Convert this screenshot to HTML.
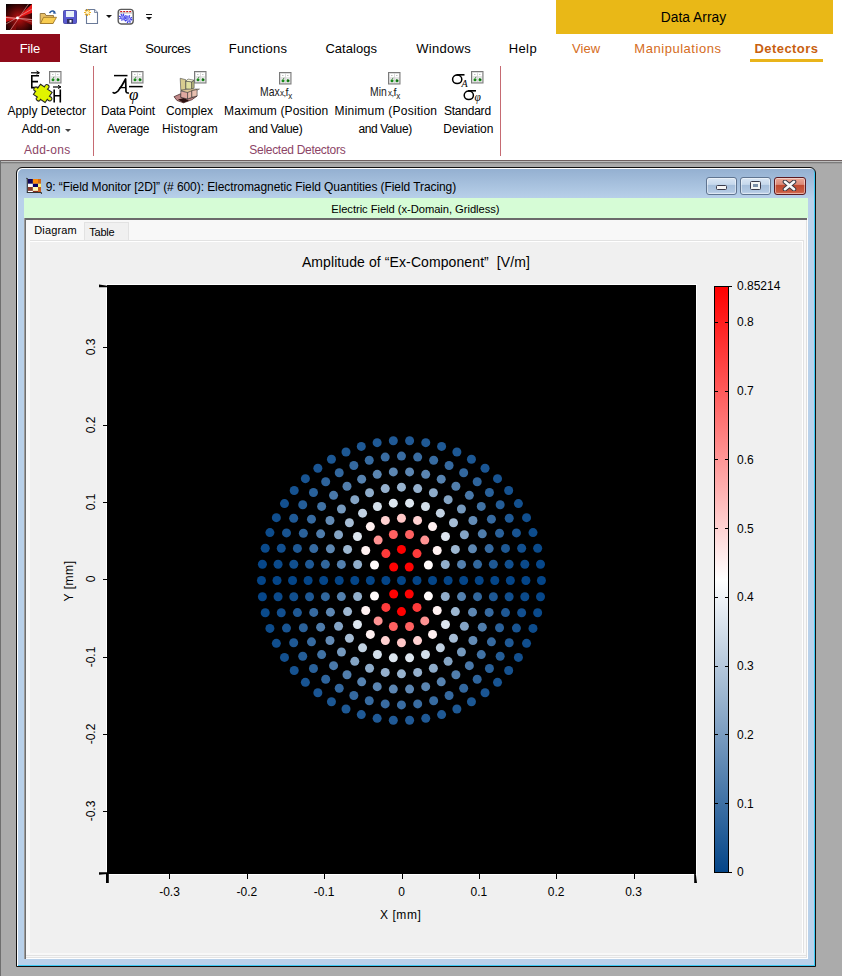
<!DOCTYPE html>
<html><head><meta charset="utf-8"><style>
html,body{margin:0;padding:0;width:842px;height:976px;overflow:hidden;background:#fff;position:relative}
.t{position:absolute;white-space:pre;font-family:"Liberation Sans", sans-serif}
</style></head><body>
<div style="position:absolute;left:0px;top:0px;width:842px;height:160px;background:#fff"></div><div style="position:absolute;left:556px;top:0px;width:277px;height:34px;background:#e9b817"></div><div class="t" style="left:660.7px;top:11.1px;font-size:13.8px;line-height:13.8px;color:#000;font-weight:normal;text-align:left;letter-spacing:0.029px;">Data Array</div><div style="position:absolute;left:0px;top:34px;width:60px;height:28px;background:#8f0b1a"></div><div class="t" style="left:19.8px;top:41.7px;font-size:13px;line-height:13px;color:#fff;font-weight:normal;text-align:left;letter-spacing:-0.206px;">File</div><div class="t" style="left:79.3px;top:41.7px;font-size:13px;line-height:13px;color:#000;font-weight:normal;text-align:left;letter-spacing:0.09px;">Start</div><div class="t" style="left:145.3px;top:41.7px;font-size:13px;line-height:13px;color:#000;font-weight:normal;text-align:left;letter-spacing:-0.382px;">Sources</div><div class="t" style="left:228.7px;top:41.7px;font-size:13px;line-height:13px;color:#000;font-weight:normal;text-align:left;letter-spacing:0.255px;">Functions</div><div class="t" style="left:325.4px;top:41.7px;font-size:13px;line-height:13px;color:#000;font-weight:normal;text-align:left;letter-spacing:0.042px;">Catalogs</div><div class="t" style="left:416.2px;top:41.7px;font-size:13px;line-height:13px;color:#000;font-weight:normal;text-align:left;letter-spacing:0.311px;">Windows</div><div class="t" style="left:508.7px;top:41.7px;font-size:13px;line-height:13px;color:#000;font-weight:normal;text-align:left;letter-spacing:0.398px;">Help</div><div class="t" style="left:571.9px;top:41.7px;font-size:13px;line-height:13px;color:#d56c22;font-weight:normal;text-align:left;letter-spacing:0.082px;">View</div><div class="t" style="left:634.3px;top:41.7px;font-size:13px;line-height:13px;color:#d56c22;font-weight:normal;text-align:left;letter-spacing:0.54px;">Manipulations</div><div class="t" style="left:754.5px;top:41.7px;font-size:13px;line-height:13px;color:#c8600f;font-weight:bold;text-align:left;letter-spacing:0.433px;">Detectors</div><div style="position:absolute;left:750px;top:59px;width:73px;height:3px;background:#e9b41a"></div><svg style="position:absolute;left:6px;top:4px" width="26" height="26" viewBox="0 0 26 26">
<defs>
<radialGradient id="ag" cx="0.5" cy="0.55" r="0.7"><stop offset="0" stop-color="#c01010"/><stop offset="0.6" stop-color="#500606"/><stop offset="1" stop-color="#080000"/></radialGradient>
<linearGradient id="ag2" x1="0" y1="0" x2="1" y2="0"><stop offset="0" stop-color="#e01818"/><stop offset="1" stop-color="#f02020"/></linearGradient>
</defs>
<rect width="26" height="26" fill="url(#ag)"/>
<path d="M11.5 14 L26 0 L26 9 Z" fill="#e81818"/>
<path d="M0 12 L11.5 14 L0 18 Z" fill="#d81414" opacity="0.9"/>
<path d="M11.5 14 L26 15 L26 21 Z" fill="#a00c0c" opacity="0.8"/>
<path d="M11.5 14 L4 26 L10 26 Z" fill="#900a0a" opacity="0.7"/>
<path d="M0 13.5 L26 15.5" stroke="#f0c8c8" stroke-width="0.7"/>
<path d="M0 20 L26 5" stroke="#e8b0b0" stroke-width="0.6"/>
<path d="M4.5 26 L22.5 0" stroke="#e0a0a0" stroke-width="0.6"/>
<path d="M11.5 14 L26 18" stroke="#d88080" stroke-width="0.5"/>
<circle cx="11.5" cy="14" r="1.4" fill="#fff"/>
</svg><svg style="position:absolute;left:39px;top:9px" width="19" height="16" viewBox="0 0 19 16">
<path d="M1.2 4.5 L1.2 14.5 L14 14.5 L14.5 6.5 L7 6.5 L6 4.5 Z" fill="#e8c068" stroke="#907038" stroke-width="0.9"/>
<path d="M1.5 14.5 L4.5 8.3 L17.5 8.3 L14 14.5 Z" fill="#f8cc50" stroke="#a07828" stroke-width="0.9"/>
<path d="M10.5 4 Q13 0.5 16 3.2" stroke="#2a5aa0" stroke-width="1.5" fill="none"/>
<path d="M14.6 1.6 L17.4 4.4 L14.2 4.8 Z" fill="#2a5aa0"/>
</svg><svg style="position:absolute;left:63px;top:10px" width="14" height="14" viewBox="0 0 14 14">
<rect x="0.5" y="0.5" width="13" height="13" rx="1" fill="#5a5ad0" stroke="#3a3aa0" stroke-width="0.8"/>
<rect x="3" y="1" width="8" height="6" fill="#e8f0f8"/>
<rect x="4" y="9" width="6" height="4.5" fill="#303060"/>
<rect x="6.5" y="10" width="2" height="2.5" fill="#fff"/>
</svg><svg style="position:absolute;left:80px;top:4px" width="22" height="22" viewBox="0 0 22 22">
<path d="M6.5 5.5 L14.5 5.5 L17.5 8.5 L17.5 19.5 L6.5 19.5 Z" fill="#fff" stroke="#6a7a98" stroke-width="1.1"/>
<path d="M14.5 5.5 L14.5 8.5 L17.5 8.5" fill="#dfe4ee" stroke="#6a7a98" stroke-width="0.8"/>
<g stroke="#f0b020" stroke-width="1.1"><path d="M7.5 5 V12 M4 8.5 H11 M5 6 L10 11 M10 6 L5 11"/></g>
<circle cx="7.5" cy="8.5" r="1.6" fill="#fff8d0"/>
</svg><svg style="position:absolute;left:117px;top:8px" width="18" height="18" viewBox="0 0 18 18">
<rect x="1.2" y="1.4" width="15" height="14.6" rx="3" fill="#fff" stroke="#5a5a5a" stroke-width="1.4"/>
<path d="M3.2 3.6 h2 M6.2 3.6 h2 M9.2 3.6 h2 M12.2 3.6 h2" stroke="#d01818" stroke-width="1.3"/>
<path d="M2 5 H15.5" stroke="#888" stroke-width="0.6"/>
<circle cx="5.6" cy="9.2" r="2.90" fill="none" stroke="#3a3ae8" stroke-width="1.5" stroke-dasharray="1.14 1.14"/><circle cx="5.6" cy="9.2" r="1.97" fill="#e8e8ff" stroke="#3a3ae8" stroke-width="0.9"/><circle cx="5.6" cy="9.2" r="0.81" fill="#fff" stroke="#3a3ae8" stroke-width="0.7"/><circle cx="11.3" cy="11.1" r="3.30" fill="none" stroke="#3a3ae8" stroke-width="1.5" stroke-dasharray="1.30 1.30"/><circle cx="11.3" cy="11.1" r="2.24" fill="#e8e8ff" stroke="#3a3ae8" stroke-width="0.9"/><circle cx="11.3" cy="11.1" r="0.92" fill="#fff" stroke="#3a3ae8" stroke-width="0.7"/>
</svg><div style="position:absolute;left:106px;top:15px;width:0;height:0;border-left:3px solid transparent;border-right:3px solid transparent;border-top:3.5px solid #111"></div>
<div style="position:absolute;left:146px;top:14px;width:6px;height:1px;background:#111"></div>
<div style="position:absolute;left:146px;top:17px;width:0;height:0;border-left:3px solid transparent;border-right:3px solid transparent;border-top:3.5px solid #111"></div><svg style="position:absolute;left:28px;top:70px" width="36" height="34" viewBox="0 0 36 34">
<path d="M3.8 5 V18.3 M3 5.8 H11 M3.8 11.6 H10 M3 17.6 H11.2" stroke="#000" stroke-width="1.6" fill="none"/>
<path d="M3 2.8 H11" stroke="#000" stroke-width="1.2"/><path d="M8.5 1 L11.5 2.8 L8.5 4.2" stroke="#000" stroke-width="1" fill="none"/>
<path d="M26.2 19.5 V32.6 M32.3 19.5 V32.6 M26 25.8 H32.5" stroke="#000" stroke-width="1.6" fill="none"/>
<path d="M25 17 H32.5" stroke="#000" stroke-width="1.2"/><path d="M30 15.3 L33 17 L30 18.5" stroke="#000" stroke-width="1" fill="none"/>
<g transform="translate(16 22.5) rotate(35) scale(0.95)">
<path d="M-8 -5 H-3 Q-4 -9 -1 -9 Q2 -9 1 -5 H7 V0 Q11 -1 11 2 Q11 5 7 4 V8 H1 Q2 11 -1 11 Q-4 11 -3 8 H-8 V4 Q-11 5 -11 2 Q-11 -1 -8 0 Z" fill="#e0f400" stroke="#222" stroke-width="1.1"/>
</g>
</svg><svg style="position:absolute;left:49px;top:71px" width="13" height="13" viewBox="0 0 13 13">
<rect x="0.5" y="0.5" width="11.5" height="11.5" fill="#d4d4d4" stroke="#7a7a7a" stroke-width="1"/>
<rect x="1.8" y="1.8" width="4.2" height="3.6" fill="#fff"/><rect x="6.8" y="1.8" width="4.2" height="3.6" fill="#fff"/>
<rect x="1.8" y="6.3" width="4.2" height="4.5" fill="#ececec"/><rect x="6.8" y="6.3" width="4.2" height="4.5" fill="#ececec"/>
<path d="M3 3.5 h1.5 M8 3.5 h1.5" stroke="#999" stroke-width="0.6"/>
<circle cx="4" cy="8.8" r="1.5" fill="#1a8a1a"/><circle cx="9" cy="8.8" r="1.5" fill="#1a8a1a"/>
<path d="M4.5 6.8 L5 5.8 M8.2 7.8 L10.2 8.8" stroke="#0a4a0a" stroke-width="0.8"/>
</svg><svg style="position:absolute;left:110px;top:72px" width="36" height="32" viewBox="0 0 36 32">
<path d="M4 3.6 H17.5" stroke="#000" stroke-width="1.5"/>
<path d="M3.2 20.6 Q5 22 8 19 Q12 14 15.6 7 L16 19.6 Q16.3 21.2 18.3 21" stroke="#000" stroke-width="1.7" fill="none" stroke-linecap="round" stroke-linejoin="round"/><path d="M9.5 15.6 H16" stroke="#000" stroke-width="1.3"/>
<path d="M19 14.6 H32.7" stroke="#000" stroke-width="1.5"/>
<text x="19" y="28" font-family="Liberation Serif" font-style="italic" font-size="17" fill="#000">φ</text>
</svg><svg style="position:absolute;left:131px;top:71px" width="13" height="13" viewBox="0 0 13 13">
<rect x="0.5" y="0.5" width="11.5" height="11.5" fill="#d4d4d4" stroke="#7a7a7a" stroke-width="1"/>
<rect x="1.8" y="1.8" width="4.2" height="3.6" fill="#fff"/><rect x="6.8" y="1.8" width="4.2" height="3.6" fill="#fff"/>
<rect x="1.8" y="6.3" width="4.2" height="4.5" fill="#ececec"/><rect x="6.8" y="6.3" width="4.2" height="4.5" fill="#ececec"/>
<path d="M3 3.5 h1.5 M8 3.5 h1.5" stroke="#999" stroke-width="0.6"/>
<circle cx="4" cy="8.8" r="1.5" fill="#1a8a1a"/><circle cx="9" cy="8.8" r="1.5" fill="#1a8a1a"/>
<path d="M4.5 6.8 L5 5.8 M8.2 7.8 L10.2 8.8" stroke="#0a4a0a" stroke-width="0.8"/>
</svg><svg style="position:absolute;left:168px;top:64px" width="40" height="40" viewBox="0 0 40 40">
<path d="M6 32.7 L12.8 29.7 L12.8 33.3 L19.6 35 L29.1 32 L23.8 35.8 L15.4 38.8 L8.9 36.4 Z" fill="#c08888" stroke="#3a1a1a" stroke-width="0.7"/>
<path d="M10 35.5 L15.4 38.8 L21 36.8 L16 34 Z" fill="#2a1010"/>
<path d="M12.2 14.3 L17.8 15.7 L17.8 25.5 L12.8 26.7 Z" fill="#d8cc90" stroke="#444" stroke-width="0.6"/>
<path d="M17.8 17.2 L23.8 17.8 L23.8 25.5 L17.8 24.9 Z" fill="#e0e0a0" stroke="#333" stroke-width="0.6"/>
<path d="M23.8 17.8 L26.1 16.2 L26.1 23.8 L23.8 25.5 Z" fill="#c8c888" stroke="#333" stroke-width="0.6"/>
<path d="M17.8 17.2 L20 15 L26.1 16.2 L23.8 17.8 Z" fill="#f4f4d0" stroke="#333" stroke-width="0.5"/>
<path d="M13 26 L23.8 25 L31.5 25 L25 28 L17.8 28.5 Z" fill="#e0c898" stroke="#444" stroke-width="0.5"/>
<path d="M12.8 27 L19.6 28.5 L19.6 35 L12.8 33.3 Z" fill="#e0a8a0" stroke="#333" stroke-width="0.6"/>
<path d="M19.6 28.5 L23.8 26.7 L23.8 33.3 L19.6 35 Z" fill="#e8b8a8" stroke="#333" stroke-width="0.6"/>
<path d="M23.8 26.7 L29.1 25.5 L29.1 32 L23.8 33.3 Z" fill="#e8c0b0" stroke="#333" stroke-width="0.6"/>
</svg><svg style="position:absolute;left:194px;top:71px" width="13" height="13" viewBox="0 0 13 13">
<rect x="0.5" y="0.5" width="11.5" height="11.5" fill="#d4d4d4" stroke="#7a7a7a" stroke-width="1"/>
<rect x="1.8" y="1.8" width="4.2" height="3.6" fill="#fff"/><rect x="6.8" y="1.8" width="4.2" height="3.6" fill="#fff"/>
<rect x="1.8" y="6.3" width="4.2" height="4.5" fill="#ececec"/><rect x="6.8" y="6.3" width="4.2" height="4.5" fill="#ececec"/>
<path d="M3 3.5 h1.5 M8 3.5 h1.5" stroke="#999" stroke-width="0.6"/>
<circle cx="4" cy="8.8" r="1.5" fill="#1a8a1a"/><circle cx="9" cy="8.8" r="1.5" fill="#1a8a1a"/>
<path d="M4.5 6.8 L5 5.8 M8.2 7.8 L10.2 8.8" stroke="#0a4a0a" stroke-width="0.8"/>
</svg><svg style="position:absolute;left:279px;top:72px" width="13" height="13" viewBox="0 0 13 13">
<rect x="0.5" y="0.5" width="11.5" height="11.5" fill="#d4d4d4" stroke="#7a7a7a" stroke-width="1"/>
<rect x="1.8" y="1.8" width="4.2" height="3.6" fill="#fff"/><rect x="6.8" y="1.8" width="4.2" height="3.6" fill="#fff"/>
<rect x="1.8" y="6.3" width="4.2" height="4.5" fill="#ececec"/><rect x="6.8" y="6.3" width="4.2" height="4.5" fill="#ececec"/>
<path d="M3 3.5 h1.5 M8 3.5 h1.5" stroke="#999" stroke-width="0.6"/>
<circle cx="4" cy="8.8" r="1.5" fill="#1a8a1a"/><circle cx="9" cy="8.8" r="1.5" fill="#1a8a1a"/>
<path d="M4.5 6.8 L5 5.8 M8.2 7.8 L10.2 8.8" stroke="#0a4a0a" stroke-width="0.8"/>
</svg><div class="t" style="left:260px;top:85px;font-size:13px;line-height:13px;color:#1a1a1a;transform-origin:0 0;transform:scaleX(0.8)">Max</div><svg style="position:absolute;left:280px;top:84px" width="16" height="18" viewBox="0 0 16 18">
<g font-family="Liberation Sans" fill="#1a1a1a">
<text x="0" y="12" font-size="9.5" textLength="4" lengthAdjust="spacingAndGlyphs">x</text>
<text x="3.6" y="12" font-size="9.5">,</text>
<text x="5.5" y="12" font-size="10" textLength="3" lengthAdjust="spacingAndGlyphs">f</text>
<text x="8.3" y="15" font-size="9" textLength="4" lengthAdjust="spacingAndGlyphs">x</text>
</g></svg><svg style="position:absolute;left:388px;top:72px" width="13" height="13" viewBox="0 0 13 13">
<rect x="0.5" y="0.5" width="11.5" height="11.5" fill="#d4d4d4" stroke="#7a7a7a" stroke-width="1"/>
<rect x="1.8" y="1.8" width="4.2" height="3.6" fill="#fff"/><rect x="6.8" y="1.8" width="4.2" height="3.6" fill="#fff"/>
<rect x="1.8" y="6.3" width="4.2" height="4.5" fill="#ececec"/><rect x="6.8" y="6.3" width="4.2" height="4.5" fill="#ececec"/>
<path d="M3 3.5 h1.5 M8 3.5 h1.5" stroke="#999" stroke-width="0.6"/>
<circle cx="4" cy="8.8" r="1.5" fill="#1a8a1a"/><circle cx="9" cy="8.8" r="1.5" fill="#1a8a1a"/>
<path d="M4.5 6.8 L5 5.8 M8.2 7.8 L10.2 8.8" stroke="#0a4a0a" stroke-width="0.8"/>
</svg><div class="t" style="left:370px;top:85px;font-size:13px;line-height:13px;color:#1a1a1a;transform-origin:0 0;transform:scaleX(0.8)">Min</div><svg style="position:absolute;left:388px;top:84px" width="16" height="18" viewBox="0 0 16 18">
<g font-family="Liberation Sans" fill="#1a1a1a">
<text x="0" y="12" font-size="9.5" textLength="4" lengthAdjust="spacingAndGlyphs">x</text>
<text x="3.6" y="12" font-size="9.5">,</text>
<text x="5.5" y="12" font-size="10" textLength="3" lengthAdjust="spacingAndGlyphs">f</text>
<text x="8.3" y="15" font-size="9" textLength="4" lengthAdjust="spacingAndGlyphs">x</text>
</g></svg><svg style="position:absolute;left:444px;top:64px" width="50" height="42" viewBox="0 0 50 42">
<ellipse cx="13.2" cy="15.3" rx="4.6" ry="4.3" fill="none" stroke="#000" stroke-width="1.5"/>
<path d="M12.5 10.8 H20.5" stroke="#000" stroke-width="1.6"/>
<text x="17.5" y="22.5" font-family="Liberation Serif" font-style="italic" font-size="10" fill="#000">A</text>
<ellipse cx="24.8" cy="31.3" rx="4.6" ry="4.3" fill="none" stroke="#000" stroke-width="1.5"/>
<path d="M24 26.8 H32" stroke="#000" stroke-width="1.6"/>
<text x="30.5" y="37" font-family="Liberation Serif" font-style="italic" font-size="11.5" fill="#000">φ</text>
</svg><svg style="position:absolute;left:471px;top:71px" width="13" height="13" viewBox="0 0 13 13">
<rect x="0.5" y="0.5" width="11.5" height="11.5" fill="#d4d4d4" stroke="#7a7a7a" stroke-width="1"/>
<rect x="1.8" y="1.8" width="4.2" height="3.6" fill="#fff"/><rect x="6.8" y="1.8" width="4.2" height="3.6" fill="#fff"/>
<rect x="1.8" y="6.3" width="4.2" height="4.5" fill="#ececec"/><rect x="6.8" y="6.3" width="4.2" height="4.5" fill="#ececec"/>
<path d="M3 3.5 h1.5 M8 3.5 h1.5" stroke="#999" stroke-width="0.6"/>
<circle cx="4" cy="8.8" r="1.5" fill="#1a8a1a"/><circle cx="9" cy="8.8" r="1.5" fill="#1a8a1a"/>
<path d="M4.5 6.8 L5 5.8 M8.2 7.8 L10.2 8.8" stroke="#0a4a0a" stroke-width="0.8"/>
</svg><div style="position:absolute;left:93px;top:66px;width:1px;height:90px;background:#c66a72"></div><div style="position:absolute;left:500px;top:66px;width:1px;height:90px;background:#c66a72"></div><div class="t" style="left:7.4px;top:105.0px;font-size:12px;line-height:12px;color:#000;font-weight:normal;text-align:left;letter-spacing:-0.008px;">Apply Detector</div><div class="t" style="left:-259.0px;width:600px;top:122.8px;font-size:12px;line-height:12px;color:#000;font-weight:normal;text-align:center;letter-spacing:0px;">Add-on</div><div style="position:absolute;left:64.5px;top:128.5px;width:0;height:0;border-left:3px solid transparent;border-right:3px solid transparent;border-top:3px solid #444"></div><div class="t" style="left:24.0px;top:143.6px;font-size:12px;line-height:12px;color:#8c4466;font-weight:normal;text-align:left;letter-spacing:0.251px;">Add-ons</div><div class="t" style="left:101.0px;top:105.0px;font-size:12px;line-height:12px;color:#000;font-weight:normal;text-align:left;letter-spacing:-0.222px;">Data Point</div><div class="t" style="left:107.0px;top:122.8px;font-size:12px;line-height:12px;color:#000;font-weight:normal;text-align:left;letter-spacing:-0.351px;">Average</div><div class="t" style="left:166.0px;top:105.0px;font-size:12px;line-height:12px;color:#000;font-weight:normal;text-align:left;letter-spacing:-0.058px;">Complex</div><div class="t" style="left:162.0px;top:122.8px;font-size:12px;line-height:12px;color:#000;font-weight:normal;text-align:left;letter-spacing:0.127px;">Histogram</div><div class="t" style="left:224.1px;top:105.0px;font-size:12px;line-height:12px;color:#000;font-weight:normal;text-align:left;letter-spacing:0.128px;">Maximum (Position</div><div class="t" style="left:248.6px;top:122.8px;font-size:12px;line-height:12px;color:#000;font-weight:normal;text-align:left;letter-spacing:-0.34px;">and Value)</div><div class="t" style="left:334.4px;top:105.0px;font-size:12px;line-height:12px;color:#000;font-weight:normal;text-align:left;letter-spacing:0.243px;">Minimum (Position</div><div class="t" style="left:358.5px;top:122.8px;font-size:12px;line-height:12px;color:#000;font-weight:normal;text-align:left;letter-spacing:-0.384px;">and Value)</div><div class="t" style="left:443.9px;top:105.0px;font-size:12px;line-height:12px;color:#000;font-weight:normal;text-align:left;letter-spacing:-0.218px;">Standard</div><div class="t" style="left:443.2px;top:122.8px;font-size:12px;line-height:12px;color:#000;font-weight:normal;text-align:left;letter-spacing:0.031px;">Deviation</div><div class="t" style="left:249.3px;top:143.8px;font-size:12px;line-height:12px;color:#8c4466;font-weight:normal;text-align:left;letter-spacing:-0.293px;">Selected Detectors</div><div style="position:absolute;left:0px;top:160px;width:842px;height:816px;background:#ababab"></div><div style="position:absolute;left:0px;top:160px;width:842px;height:1px;background:#6e6060"></div><div style="position:absolute;left:0px;top:161px;width:842px;height:1px;background:#bdbdbd"></div><div style="position:absolute;left:0px;top:162px;width:842px;height:1px;background:#7c7c7c"></div><div style="position:absolute;left:0px;top:163px;width:842px;height:1px;background:#9c9c9c"></div><div style="position:absolute;left:0px;top:160px;width:1px;height:816px;background:#6f6f6f"></div><div style="position:absolute;left:16px;top:167px;width:800px;height:800px;background:linear-gradient(#93afd0,#b9d1ea 31px,#b9d1ea);border:1px solid #101010;border-radius:6px 6px 0 0;box-sizing:border-box;box-shadow:inset 1px 1px 0 #fff, inset -1px -1px 0 #3ccaf4"></div><svg style="position:absolute;left:24px;top:176px" width="20" height="20" viewBox="0 0 20 20">
<rect x="3.9" y="3" width="5" height="4.8" fill="#16085a"/><rect x="8.9" y="3" width="5.1" height="4.8" fill="#ff8c0a"/><rect x="14" y="3" width="3" height="4.8" fill="#d06818"/>
<rect x="3.9" y="7.8" width="5" height="3.2" fill="#fff"/><rect x="8.9" y="7.8" width="5.1" height="3.2" fill="#0a0068"/><rect x="14" y="7.8" width="3" height="3.2" fill="#fff070"/>
<rect x="3.9" y="11" width="5" height="3.9" fill="#8a3a2a"/><rect x="8.9" y="11" width="5.1" height="3.9" fill="#fffab8"/><rect x="14" y="11" width="3" height="3.9" fill="#c85a18"/>
<rect x="3.9" y="14.9" width="5" height="1.2" fill="#fff"/><rect x="8.9" y="14.9" width="5.1" height="1.2" fill="#8a3020"/><rect x="14" y="14.9" width="3" height="1.2" fill="#c85a18"/>
<path d="M2.2 2.2 L3.3 2.6 V16.5 H17.2 L17.6 17.8" stroke="#333" stroke-width="1.1" fill="none"/></svg><div class="t" style="left:45.7px;top:180.6px;font-size:12px;line-height:12px;color:#000;font-weight:normal;text-align:left;letter-spacing:-0.079px;">9: “Field Monitor [2D]” (# 600): Electromagnetic Field Quantities (Field Tracing)</div><div style="position:absolute;left:706px;top:177px;width:31px;height:18px;background:linear-gradient(#dae6f4,#c6d8ec 40%,#a6bfdb 46%,#b2c8e2 85%,#c8daee);border:1px solid #5f7490;border-radius:3px;box-sizing:border-box;box-shadow:inset 0 0 0 1px rgba(255,255,255,0.45)"></div><div style="position:absolute;left:740px;top:177px;width:31px;height:18px;background:linear-gradient(#dae6f4,#c6d8ec 40%,#a6bfdb 46%,#b2c8e2 85%,#c8daee);border:1px solid #5f7490;border-radius:3px;box-sizing:border-box;box-shadow:inset 0 0 0 1px rgba(255,255,255,0.45)"></div><div style="position:absolute;left:774px;top:177px;width:32px;height:18px;background:linear-gradient(#eaa898,#dc8a78 40%,#c04a30 46%,#c85a40 85%,#d87860);border:1px solid #5a1a22;border-radius:3px;box-sizing:border-box;box-shadow:inset 0 0 0 1px rgba(255,255,255,0.45)"></div><div style="position:absolute;left:716px;top:185px;width:11px;height:5px;background:#f4f4f4;border:1px solid #3a3a4a;box-sizing:border-box;border-radius:1.5px"></div><div style="position:absolute;left:750px;top:181px;width:11px;height:9px;background:#f4f4f4;border:1px solid #3a3a4a;box-sizing:border-box;border-radius:1.5px"></div><div style="position:absolute;left:753px;top:184px;width:5px;height:3px;background:#7d90a8;"></div><svg style="position:absolute;left:782px;top:180px" width="15" height="11" viewBox="0 0 15 11"><path d="M3 1.8 L12 9.2 M12 1.8 L3 9.2" stroke="#3a3a44" stroke-width="4.6" stroke-linecap="round"/><path d="M3 1.8 L12 9.2 M12 1.8 L3 9.2" stroke="#f8f8f8" stroke-width="2.6" stroke-linecap="round"/></svg><div style="position:absolute;left:24px;top:198px;width:784px;height:21px;background:#d6fcd6"></div><div class="t" style="left:331.3px;top:203.9px;font-size:11.2px;line-height:11.2px;color:#000;font-weight:normal;text-align:left;letter-spacing:-0.044px;">Electric Field (x-Domain, Gridless)</div><div style="position:absolute;left:24px;top:218px;width:784px;height:741px;background:#f8f8f8"></div><div style="position:absolute;left:24px;top:218px;width:783px;height:2px;background:#6a6a6a"></div><div style="position:absolute;left:24px;top:218px;width:1px;height:741px;background:#9a9a9a"></div><div style="position:absolute;left:25px;top:219px;width:1px;height:740px;background:#6e6e6e"></div><div style="position:absolute;left:806px;top:220px;width:1px;height:739px;background:#e0e0e0"></div><div style="position:absolute;left:807px;top:220px;width:1px;height:739px;background:#ffffff"></div><div style="position:absolute;left:26px;top:955px;width:780px;height:1px;background:#e2e2e2"></div><div style="position:absolute;left:26px;top:957px;width:781px;height:1px;background:#e4e4e4"></div><div style="position:absolute;left:26px;top:958px;width:782px;height:1px;background:#ffffff"></div><div class="t" style="left:34.3px;top:224.7px;font-size:11px;line-height:11px;color:#000;font-weight:normal;text-align:left;letter-spacing:0.116px;">Diagram</div><div style="position:absolute;left:84px;top:222px;width:45px;height:19px;background:#f0f0f0;border:1px solid #e2e2e2;border-bottom:none;box-sizing:border-box"></div><div class="t" style="left:89.3px;top:227.2px;font-size:11px;line-height:11px;color:#000;font-weight:normal;text-align:left;letter-spacing:-0.22px;">Table</div><div style="position:absolute;left:30px;top:240px;width:774px;height:713px;background:#f0f0f0;border-top:1px solid #e2e2e2;border-right:1px solid #e2e2e2;box-sizing:border-box;box-shadow:inset -1px 1px 0 #fff"></div><div class="t" style="left:301.9px;top:254.8px;font-size:14px;line-height:14px;color:#000;font-weight:normal;text-align:left;letter-spacing:0.095px;">Amplitude of “Ex-Component”  [V/m]</div><div style="position:absolute;left:106px;top:284px;width:591px;height:591px;background:#fff"></div><div style="position:absolute;left:107px;top:285px;width:589px;height:589px;background:#000"></div><div style="position:absolute;left:169px;top:874px;width:1px;height:5px;background:#000"></div><div class="t" style="left:-130.5px;width:600px;top:885.8px;font-size:12px;line-height:12px;color:#000;font-weight:normal;text-align:center;letter-spacing:0px;">-0.3</div><div style="position:absolute;left:247px;top:874px;width:1px;height:5px;background:#000"></div><div class="t" style="left:-53.2px;width:600px;top:885.8px;font-size:12px;line-height:12px;color:#000;font-weight:normal;text-align:center;letter-spacing:0px;">-0.2</div><div style="position:absolute;left:324px;top:874px;width:1px;height:5px;background:#000"></div><div class="t" style="left:24.1px;width:600px;top:885.8px;font-size:12px;line-height:12px;color:#000;font-weight:normal;text-align:center;letter-spacing:0px;">-0.1</div><div style="position:absolute;left:402px;top:874px;width:1px;height:5px;background:#000"></div><div class="t" style="left:101.5px;width:600px;top:885.8px;font-size:12px;line-height:12px;color:#000;font-weight:normal;text-align:center;letter-spacing:0px;">0</div><div style="position:absolute;left:479px;top:874px;width:1px;height:5px;background:#000"></div><div class="t" style="left:178.9px;width:600px;top:885.8px;font-size:12px;line-height:12px;color:#000;font-weight:normal;text-align:center;letter-spacing:0px;">0.1</div><div style="position:absolute;left:556px;top:874px;width:1px;height:5px;background:#000"></div><div class="t" style="left:256.2px;width:600px;top:885.8px;font-size:12px;line-height:12px;color:#000;font-weight:normal;text-align:center;letter-spacing:0px;">0.2</div><div style="position:absolute;left:634px;top:874px;width:1px;height:5px;background:#000"></div><div class="t" style="left:333.5px;width:600px;top:885.8px;font-size:12px;line-height:12px;color:#000;font-weight:normal;text-align:center;letter-spacing:0px;">0.3</div><div class="t" style="left:100.7px;width:600px;top:908.8px;font-size:12px;line-height:12px;color:#000;font-weight:normal;text-align:center;letter-spacing:0.55px;">X [mm]</div><div style="position:absolute;left:103px;top:811px;width:4px;height:1px;background:#000"></div><div class="t" style="left:41px;top:805.3px;width:100px;height:12px;font-size:12px;line-height:12px;text-align:center;transform:rotate(-90deg);">-0.3</div><div style="position:absolute;left:103px;top:734px;width:4px;height:1px;background:#000"></div><div class="t" style="left:41px;top:727.95px;width:100px;height:12px;font-size:12px;line-height:12px;text-align:center;transform:rotate(-90deg);">-0.2</div><div style="position:absolute;left:103px;top:657px;width:4px;height:1px;background:#000"></div><div class="t" style="left:41px;top:650.6px;width:100px;height:12px;font-size:12px;line-height:12px;text-align:center;transform:rotate(-90deg);">-0.1</div><div style="position:absolute;left:103px;top:579px;width:4px;height:1px;background:#000"></div><div class="t" style="left:41px;top:573.25px;width:100px;height:12px;font-size:12px;line-height:12px;text-align:center;transform:rotate(-90deg);">0</div><div style="position:absolute;left:103px;top:502px;width:4px;height:1px;background:#000"></div><div class="t" style="left:41px;top:495.9px;width:100px;height:12px;font-size:12px;line-height:12px;text-align:center;transform:rotate(-90deg);">0.1</div><div style="position:absolute;left:103px;top:425px;width:4px;height:1px;background:#000"></div><div class="t" style="left:41px;top:418.54999999999995px;width:100px;height:12px;font-size:12px;line-height:12px;text-align:center;transform:rotate(-90deg);">0.2</div><div style="position:absolute;left:103px;top:347px;width:4px;height:1px;background:#000"></div><div class="t" style="left:41px;top:341.20000000000005px;width:100px;height:12px;font-size:12px;line-height:12px;text-align:center;transform:rotate(-90deg);">0.3</div><div class="t" style="left:19.299999999999997px;top:574.7px;width:100px;height:12px;font-size:12px;line-height:12px;text-align:center;letter-spacing:0.55px;transform:rotate(-90deg);">Y [mm]</div><svg style="position:absolute;left:90px;top:276px" width="20" height="20" viewBox="0 0 20 20"><path d="M9 8.6 L17.5 9.8 L17.5 11.2 L9 11.2 Z" fill="#000"/></svg><svg style="position:absolute;left:90px;top:864px" width="20" height="24" viewBox="0 0 20 24"><path d="M9 8.3 L17.5 8.3 L17.5 10 L9 10.8 Z" fill="#000"/><path d="M16 10 L18.8 10 L18.8 19 L16 19 Z" fill="#000"/></svg><svg style="position:absolute;left:684px;top:864px" width="20" height="24" viewBox="0 0 20 24"><path d="M10.2 10 L11.8 10 L13 19 L10.2 19 Z" fill="#000"/></svg><div style="position:absolute;left:714px;top:286px;width:15px;height:587px;border:1px solid #000;box-sizing:border-box;background:linear-gradient(to top,rgb(4,69,136) 0%,rgb(29,88,148) 5%,rgb(54,106,160) 10%,rgb(79,125,172) 15%,rgb(104,143,184) 20%,rgb(130,162,196) 25%,rgb(155,181,207) 30%,rgb(180,199,219) 35%,rgb(205,218,231) 40%,rgb(230,236,243) 45%,rgb(255,255,255) 50%,rgb(255,230,230) 55%,rgb(255,204,204) 60%,rgb(255,178,178) 65%,rgb(255,153,153) 70%,rgb(255,127,127) 75%,rgb(255,102,102) 80%,rgb(255,76,76) 85%,rgb(255,51,51) 90%,rgb(255,25,25) 95%,rgb(255,0,0) 100%)"></div><div style="position:absolute;left:715px;top:322px;width:3px;height:1px;background:#000"></div><div style="position:absolute;left:725px;top:322px;width:3px;height:1px;background:#000"></div><div class="t" style="left:737.0px;top:316.2px;font-size:12px;line-height:12px;color:#000;font-weight:normal;text-align:left;letter-spacing:0px;">0.8</div><div style="position:absolute;left:715px;top:391px;width:3px;height:1px;background:#000"></div><div style="position:absolute;left:725px;top:391px;width:3px;height:1px;background:#000"></div><div class="t" style="left:737.0px;top:385.0px;font-size:12px;line-height:12px;color:#000;font-weight:normal;text-align:left;letter-spacing:0px;">0.7</div><div style="position:absolute;left:715px;top:459px;width:3px;height:1px;background:#000"></div><div style="position:absolute;left:725px;top:459px;width:3px;height:1px;background:#000"></div><div class="t" style="left:737.0px;top:453.7px;font-size:12px;line-height:12px;color:#000;font-weight:normal;text-align:left;letter-spacing:0px;">0.6</div><div style="position:absolute;left:715px;top:528px;width:3px;height:1px;background:#000"></div><div style="position:absolute;left:725px;top:528px;width:3px;height:1px;background:#000"></div><div class="t" style="left:737.0px;top:522.5px;font-size:12px;line-height:12px;color:#000;font-weight:normal;text-align:left;letter-spacing:0px;">0.5</div><div style="position:absolute;left:715px;top:597px;width:3px;height:1px;background:#000"></div><div style="position:absolute;left:725px;top:597px;width:3px;height:1px;background:#000"></div><div class="t" style="left:737.0px;top:591.3px;font-size:12px;line-height:12px;color:#000;font-weight:normal;text-align:left;letter-spacing:0px;">0.4</div><div style="position:absolute;left:715px;top:666px;width:3px;height:1px;background:#000"></div><div style="position:absolute;left:725px;top:666px;width:3px;height:1px;background:#000"></div><div class="t" style="left:737.0px;top:660.0px;font-size:12px;line-height:12px;color:#000;font-weight:normal;text-align:left;letter-spacing:0px;">0.3</div><div style="position:absolute;left:715px;top:734px;width:3px;height:1px;background:#000"></div><div style="position:absolute;left:725px;top:734px;width:3px;height:1px;background:#000"></div><div class="t" style="left:737.0px;top:728.8px;font-size:12px;line-height:12px;color:#000;font-weight:normal;text-align:left;letter-spacing:0px;">0.2</div><div style="position:absolute;left:715px;top:803px;width:3px;height:1px;background:#000"></div><div style="position:absolute;left:725px;top:803px;width:3px;height:1px;background:#000"></div><div class="t" style="left:737.0px;top:797.6px;font-size:12px;line-height:12px;color:#000;font-weight:normal;text-align:left;letter-spacing:0px;">0.1</div><div style="position:absolute;left:714px;top:286px;width:18px;height:1px;background:#000"></div><div style="position:absolute;left:714px;top:872px;width:18px;height:1px;background:#000"></div><div class="t" style="left:737.0px;top:280.3px;font-size:12px;line-height:12px;color:#000;font-weight:normal;text-align:left;letter-spacing:0px;">0.85214</div><div class="t" style="left:737.0px;top:866.3px;font-size:12px;line-height:12px;color:#000;font-weight:normal;text-align:left;letter-spacing:0px;">0</div><svg style="position:absolute;left:0;top:0" width="842" height="976"><circle cx="401.45" cy="580.50" r="4.5" fill="#044588"/><circle cx="417.00" cy="580.50" r="4.5" fill="#044588"/><circle cx="409.23" cy="567.03" r="4.5" fill="#ff0202"/><circle cx="393.67" cy="567.03" r="4.5" fill="#ff0202"/><circle cx="385.89" cy="580.50" r="4.5" fill="#044588"/><circle cx="393.67" cy="593.97" r="4.5" fill="#ff0202"/><circle cx="409.23" cy="593.97" r="4.5" fill="#ff0202"/><circle cx="432.56" cy="580.50" r="4.5" fill="#044588"/><circle cx="428.39" cy="564.95" r="4.5" fill="#fffafa"/><circle cx="417.00" cy="553.56" r="4.5" fill="#ff3b3b"/><circle cx="401.45" cy="549.39" r="4.5" fill="#ff0000"/><circle cx="385.89" cy="553.56" r="4.5" fill="#ff3b3b"/><circle cx="374.51" cy="564.95" r="4.5" fill="#fffafa"/><circle cx="370.34" cy="580.50" r="4.5" fill="#044588"/><circle cx="374.51" cy="596.05" r="4.5" fill="#fffafa"/><circle cx="385.89" cy="607.44" r="4.5" fill="#ff3b3b"/><circle cx="401.45" cy="611.61" r="4.5" fill="#ff0000"/><circle cx="417.00" cy="607.44" r="4.5" fill="#ff3b3b"/><circle cx="428.39" cy="596.06" r="4.5" fill="#fffafa"/><circle cx="448.12" cy="580.50" r="4.5" fill="#044588"/><circle cx="445.30" cy="564.54" r="4.5" fill="#91aecb"/><circle cx="437.20" cy="550.50" r="4.5" fill="#fff1f1"/><circle cx="424.78" cy="540.09" r="4.5" fill="#ff9393"/><circle cx="409.55" cy="534.54" r="4.5" fill="#ff6161"/><circle cx="393.35" cy="534.54" r="4.5" fill="#ff6161"/><circle cx="378.12" cy="540.09" r="4.5" fill="#ff9393"/><circle cx="365.70" cy="550.50" r="4.5" fill="#fff1f1"/><circle cx="357.60" cy="564.54" r="4.5" fill="#91aecb"/><circle cx="354.78" cy="580.50" r="4.5" fill="#044588"/><circle cx="357.60" cy="596.46" r="4.5" fill="#91aecb"/><circle cx="365.70" cy="610.50" r="4.5" fill="#fff1f1"/><circle cx="378.12" cy="620.91" r="4.5" fill="#ff9393"/><circle cx="393.35" cy="626.46" r="4.5" fill="#ff6161"/><circle cx="409.55" cy="626.46" r="4.5" fill="#ff6161"/><circle cx="424.78" cy="620.91" r="4.5" fill="#ff9393"/><circle cx="437.20" cy="610.50" r="4.5" fill="#fff1f1"/><circle cx="445.30" cy="596.46" r="4.5" fill="#91aecb"/><circle cx="463.67" cy="580.50" r="4.5" fill="#044588"/><circle cx="461.55" cy="564.40" r="4.5" fill="#5380ae"/><circle cx="455.33" cy="549.39" r="4.5" fill="#9db7d1"/><circle cx="445.45" cy="536.50" r="4.5" fill="#dde6ef"/><circle cx="432.56" cy="526.62" r="4.5" fill="#fff0f0"/><circle cx="417.55" cy="520.40" r="4.5" fill="#ffd1d1"/><circle cx="401.45" cy="518.28" r="4.5" fill="#ffc7c7"/><circle cx="385.35" cy="520.40" r="4.5" fill="#ffd1d1"/><circle cx="370.34" cy="526.62" r="4.5" fill="#fff0f0"/><circle cx="357.45" cy="536.50" r="4.5" fill="#dde6ef"/><circle cx="347.57" cy="549.39" r="4.5" fill="#9db7d1"/><circle cx="341.35" cy="564.40" r="4.5" fill="#5380ae"/><circle cx="339.23" cy="580.50" r="4.5" fill="#044588"/><circle cx="341.35" cy="596.60" r="4.5" fill="#5380ae"/><circle cx="347.57" cy="611.61" r="4.5" fill="#9db7d1"/><circle cx="357.45" cy="624.50" r="4.5" fill="#dde6ef"/><circle cx="370.34" cy="634.38" r="4.5" fill="#fff0f0"/><circle cx="385.35" cy="640.60" r="4.5" fill="#ffd1d1"/><circle cx="401.45" cy="642.72" r="4.5" fill="#ffc7c7"/><circle cx="417.55" cy="640.60" r="4.5" fill="#ffd1d1"/><circle cx="432.56" cy="634.38" r="4.5" fill="#fff0f0"/><circle cx="445.45" cy="624.50" r="4.5" fill="#dde6ef"/><circle cx="455.33" cy="611.61" r="4.5" fill="#9db7d1"/><circle cx="461.55" cy="596.60" r="4.5" fill="#5380ae"/><circle cx="479.23" cy="580.50" r="4.5" fill="#044588"/><circle cx="477.53" cy="564.33" r="4.5" fill="#31679d"/><circle cx="472.50" cy="548.87" r="4.5" fill="#5d87b2"/><circle cx="464.37" cy="534.79" r="4.5" fill="#84a4c5"/><circle cx="453.49" cy="522.70" r="4.5" fill="#a6bdd5"/><circle cx="440.34" cy="513.14" r="4.5" fill="#c1d1e1"/><circle cx="425.48" cy="506.53" r="4.5" fill="#d3dfea"/><circle cx="409.58" cy="503.15" r="4.5" fill="#dde6ef"/><circle cx="393.32" cy="503.15" r="4.5" fill="#dde6ef"/><circle cx="377.42" cy="506.53" r="4.5" fill="#d3dfea"/><circle cx="362.56" cy="513.14" r="4.5" fill="#c1d1e1"/><circle cx="349.41" cy="522.70" r="4.5" fill="#a6bdd5"/><circle cx="338.53" cy="534.79" r="4.5" fill="#84a4c5"/><circle cx="330.40" cy="548.87" r="4.5" fill="#5d87b2"/><circle cx="325.37" cy="564.33" r="4.5" fill="#31679d"/><circle cx="323.67" cy="580.50" r="4.5" fill="#044588"/><circle cx="325.37" cy="596.67" r="4.5" fill="#31679d"/><circle cx="330.40" cy="612.13" r="4.5" fill="#5d87b2"/><circle cx="338.53" cy="626.21" r="4.5" fill="#84a4c5"/><circle cx="349.41" cy="638.30" r="4.5" fill="#a6bdd5"/><circle cx="362.56" cy="647.86" r="4.5" fill="#c1d1e1"/><circle cx="377.42" cy="654.47" r="4.5" fill="#d3dfea"/><circle cx="393.32" cy="657.85" r="4.5" fill="#dde6ef"/><circle cx="409.58" cy="657.85" r="4.5" fill="#dde6ef"/><circle cx="425.48" cy="654.47" r="4.5" fill="#d3dfea"/><circle cx="440.34" cy="647.86" r="4.5" fill="#c1d1e1"/><circle cx="453.49" cy="638.30" r="4.5" fill="#a6bdd5"/><circle cx="464.37" cy="626.21" r="4.5" fill="#84a4c5"/><circle cx="472.50" cy="612.13" r="4.5" fill="#5d87b2"/><circle cx="477.53" cy="596.67" r="4.5" fill="#31679d"/><circle cx="494.78" cy="580.50" r="4.5" fill="#044588"/><circle cx="493.36" cy="564.29" r="4.5" fill="#1e5894"/><circle cx="489.15" cy="548.58" r="4.5" fill="#366aa0"/><circle cx="482.28" cy="533.84" r="4.5" fill="#4e7cab"/><circle cx="472.94" cy="520.51" r="4.5" fill="#638bb5"/><circle cx="461.44" cy="509.01" r="4.5" fill="#7599bd"/><circle cx="448.12" cy="499.67" r="4.5" fill="#84a4c4"/><circle cx="433.37" cy="492.80" r="4.5" fill="#8eacca"/><circle cx="417.66" cy="488.59" r="4.5" fill="#95b0cd"/><circle cx="401.45" cy="487.17" r="4.5" fill="#97b2ce"/><circle cx="385.24" cy="488.59" r="4.5" fill="#95b0cd"/><circle cx="369.53" cy="492.80" r="4.5" fill="#8eacca"/><circle cx="354.79" cy="499.67" r="4.5" fill="#84a4c4"/><circle cx="341.46" cy="509.01" r="4.5" fill="#7599bd"/><circle cx="329.96" cy="520.51" r="4.5" fill="#638bb5"/><circle cx="320.62" cy="533.83" r="4.5" fill="#4e7cab"/><circle cx="313.75" cy="548.58" r="4.5" fill="#366aa0"/><circle cx="309.54" cy="564.29" r="4.5" fill="#1e5894"/><circle cx="308.12" cy="580.50" r="4.5" fill="#044588"/><circle cx="309.54" cy="596.71" r="4.5" fill="#1e5894"/><circle cx="313.75" cy="612.42" r="4.5" fill="#366aa0"/><circle cx="320.62" cy="627.16" r="4.5" fill="#4e7cab"/><circle cx="329.96" cy="640.49" r="4.5" fill="#638bb5"/><circle cx="341.46" cy="651.99" r="4.5" fill="#7599bd"/><circle cx="354.78" cy="661.33" r="4.5" fill="#84a4c4"/><circle cx="369.53" cy="668.20" r="4.5" fill="#8eacca"/><circle cx="385.24" cy="672.41" r="4.5" fill="#95b0cd"/><circle cx="401.45" cy="673.83" r="4.5" fill="#97b2ce"/><circle cx="417.66" cy="672.41" r="4.5" fill="#95b0cd"/><circle cx="433.37" cy="668.20" r="4.5" fill="#8eacca"/><circle cx="448.11" cy="661.33" r="4.5" fill="#84a4c4"/><circle cx="461.44" cy="651.99" r="4.5" fill="#7599bd"/><circle cx="472.94" cy="640.49" r="4.5" fill="#638bb5"/><circle cx="482.28" cy="627.16" r="4.5" fill="#4e7cab"/><circle cx="489.15" cy="612.42" r="4.5" fill="#366aa0"/><circle cx="493.36" cy="596.71" r="4.5" fill="#1e5894"/><circle cx="510.33" cy="580.50" r="4.5" fill="#044588"/><circle cx="509.12" cy="564.27" r="4.5" fill="#114f8e"/><circle cx="505.50" cy="548.41" r="4.5" fill="#1e5894"/><circle cx="499.55" cy="533.26" r="4.5" fill="#2a619a"/><circle cx="491.42" cy="519.16" r="4.5" fill="#366aa0"/><circle cx="481.27" cy="506.44" r="4.5" fill="#4072a4"/><circle cx="469.34" cy="495.37" r="4.5" fill="#4978a9"/><circle cx="455.89" cy="486.20" r="4.5" fill="#517eac"/><circle cx="441.23" cy="479.14" r="4.5" fill="#5682af"/><circle cx="425.68" cy="474.34" r="4.5" fill="#5a85b1"/><circle cx="409.59" cy="471.92" r="4.5" fill="#5c86b2"/><circle cx="393.31" cy="471.92" r="4.5" fill="#5c86b2"/><circle cx="377.22" cy="474.34" r="4.5" fill="#5a85b1"/><circle cx="361.67" cy="479.14" r="4.5" fill="#5682af"/><circle cx="347.01" cy="486.20" r="4.5" fill="#517eac"/><circle cx="333.56" cy="495.37" r="4.5" fill="#4978a9"/><circle cx="321.63" cy="506.44" r="4.5" fill="#4072a4"/><circle cx="311.48" cy="519.16" r="4.5" fill="#366aa0"/><circle cx="303.35" cy="533.26" r="4.5" fill="#2a619a"/><circle cx="297.40" cy="548.41" r="4.5" fill="#1e5894"/><circle cx="293.78" cy="564.27" r="4.5" fill="#114f8e"/><circle cx="292.56" cy="580.50" r="4.5" fill="#044588"/><circle cx="293.78" cy="596.73" r="4.5" fill="#114f8e"/><circle cx="297.40" cy="612.59" r="4.5" fill="#1e5894"/><circle cx="303.35" cy="627.74" r="4.5" fill="#2a619a"/><circle cx="311.48" cy="641.84" r="4.5" fill="#366aa0"/><circle cx="321.63" cy="654.56" r="4.5" fill="#4072a4"/><circle cx="333.56" cy="665.63" r="4.5" fill="#4978a9"/><circle cx="347.01" cy="674.80" r="4.5" fill="#517eac"/><circle cx="361.67" cy="681.86" r="4.5" fill="#5682af"/><circle cx="377.22" cy="686.66" r="4.5" fill="#5a85b1"/><circle cx="393.31" cy="689.08" r="4.5" fill="#5c86b2"/><circle cx="409.59" cy="689.08" r="4.5" fill="#5c86b2"/><circle cx="425.68" cy="686.66" r="4.5" fill="#5a85b1"/><circle cx="441.23" cy="681.86" r="4.5" fill="#5682af"/><circle cx="455.89" cy="674.80" r="4.5" fill="#517eac"/><circle cx="469.34" cy="665.63" r="4.5" fill="#4978a9"/><circle cx="481.27" cy="654.56" r="4.5" fill="#4072a4"/><circle cx="491.42" cy="641.84" r="4.5" fill="#366aa0"/><circle cx="499.55" cy="627.74" r="4.5" fill="#2a619a"/><circle cx="505.50" cy="612.59" r="4.5" fill="#1e5894"/><circle cx="509.12" cy="596.73" r="4.5" fill="#114f8e"/><circle cx="525.89" cy="580.50" r="4.5" fill="#044588"/><circle cx="524.83" cy="564.26" r="4.5" fill="#0b4a8b"/><circle cx="521.65" cy="548.29" r="4.5" fill="#124f8f"/><circle cx="516.42" cy="532.88" r="4.5" fill="#185492"/><circle cx="509.22" cy="518.28" r="4.5" fill="#1f5995"/><circle cx="500.17" cy="504.75" r="4.5" fill="#245d97"/><circle cx="489.44" cy="492.51" r="4.5" fill="#29619a"/><circle cx="477.20" cy="481.78" r="4.5" fill="#2e649c"/><circle cx="463.67" cy="472.73" r="4.5" fill="#32679e"/><circle cx="449.07" cy="465.53" r="4.5" fill="#35699f"/><circle cx="433.66" cy="460.30" r="4.5" fill="#376ba0"/><circle cx="417.69" cy="457.12" r="4.5" fill="#396ca1"/><circle cx="401.45" cy="456.06" r="4.5" fill="#396ca1"/><circle cx="385.21" cy="457.12" r="4.5" fill="#396ca1"/><circle cx="369.24" cy="460.30" r="4.5" fill="#376ba0"/><circle cx="353.83" cy="465.53" r="4.5" fill="#35699f"/><circle cx="339.23" cy="472.73" r="4.5" fill="#32679e"/><circle cx="325.70" cy="481.78" r="4.5" fill="#2e649c"/><circle cx="313.46" cy="492.51" r="4.5" fill="#29619a"/><circle cx="302.73" cy="504.75" r="4.5" fill="#245d97"/><circle cx="293.68" cy="518.28" r="4.5" fill="#1f5995"/><circle cx="286.48" cy="532.88" r="4.5" fill="#185492"/><circle cx="281.25" cy="548.29" r="4.5" fill="#124f8f"/><circle cx="278.07" cy="564.26" r="4.5" fill="#0b4a8b"/><circle cx="277.01" cy="580.50" r="4.5" fill="#044588"/><circle cx="278.07" cy="596.74" r="4.5" fill="#0b4a8b"/><circle cx="281.25" cy="612.71" r="4.5" fill="#124f8f"/><circle cx="286.48" cy="628.12" r="4.5" fill="#185492"/><circle cx="293.68" cy="642.72" r="4.5" fill="#1f5995"/><circle cx="302.73" cy="656.25" r="4.5" fill="#245d97"/><circle cx="313.46" cy="668.49" r="4.5" fill="#29619a"/><circle cx="325.70" cy="679.22" r="4.5" fill="#2e649c"/><circle cx="339.23" cy="688.27" r="4.5" fill="#32679e"/><circle cx="353.83" cy="695.47" r="4.5" fill="#35699f"/><circle cx="369.24" cy="700.70" r="4.5" fill="#376ba0"/><circle cx="385.21" cy="703.88" r="4.5" fill="#396ca1"/><circle cx="401.45" cy="704.94" r="4.5" fill="#396ca1"/><circle cx="417.69" cy="703.88" r="4.5" fill="#396ca1"/><circle cx="433.66" cy="700.70" r="4.5" fill="#376ba0"/><circle cx="449.07" cy="695.47" r="4.5" fill="#35699f"/><circle cx="463.67" cy="688.27" r="4.5" fill="#32679e"/><circle cx="477.20" cy="679.22" r="4.5" fill="#2e649c"/><circle cx="489.44" cy="668.49" r="4.5" fill="#29619a"/><circle cx="500.17" cy="656.25" r="4.5" fill="#245d97"/><circle cx="509.22" cy="642.72" r="4.5" fill="#1f5995"/><circle cx="516.42" cy="628.12" r="4.5" fill="#185492"/><circle cx="521.65" cy="612.71" r="4.5" fill="#124f8f"/><circle cx="524.83" cy="596.74" r="4.5" fill="#0b4a8b"/><circle cx="541.44" cy="580.50" r="4.5" fill="#044588"/><circle cx="540.50" cy="564.25" r="4.5" fill="#07478a"/><circle cx="537.67" cy="548.21" r="4.5" fill="#0a4a8b"/><circle cx="533.00" cy="532.62" r="4.5" fill="#0d4c8c"/><circle cx="526.55" cy="517.67" r="4.5" fill="#104e8e"/><circle cx="518.41" cy="503.57" r="4.5" fill="#13508f"/><circle cx="508.69" cy="490.51" r="4.5" fill="#165290"/><circle cx="497.52" cy="478.67" r="4.5" fill="#185492"/><circle cx="485.05" cy="468.21" r="4.5" fill="#1a5593"/><circle cx="471.45" cy="459.26" r="4.5" fill="#1c5793"/><circle cx="456.90" cy="451.95" r="4.5" fill="#1d5894"/><circle cx="441.60" cy="446.39" r="4.5" fill="#1f5995"/><circle cx="425.76" cy="442.63" r="4.5" fill="#1f5995"/><circle cx="409.59" cy="440.74" r="4.5" fill="#205995"/><circle cx="393.31" cy="440.74" r="4.5" fill="#205995"/><circle cx="377.14" cy="442.63" r="4.5" fill="#1f5995"/><circle cx="361.30" cy="446.39" r="4.5" fill="#1f5995"/><circle cx="346.00" cy="451.95" r="4.5" fill="#1d5894"/><circle cx="331.45" cy="459.26" r="4.5" fill="#1c5793"/><circle cx="317.85" cy="468.21" r="4.5" fill="#1a5593"/><circle cx="305.38" cy="478.67" r="4.5" fill="#185492"/><circle cx="294.21" cy="490.51" r="4.5" fill="#165290"/><circle cx="284.49" cy="503.57" r="4.5" fill="#13508f"/><circle cx="276.35" cy="517.67" r="4.5" fill="#104e8e"/><circle cx="269.90" cy="532.62" r="4.5" fill="#0d4c8c"/><circle cx="265.23" cy="548.21" r="4.5" fill="#0a4a8b"/><circle cx="262.40" cy="564.25" r="4.5" fill="#07478a"/><circle cx="261.45" cy="580.50" r="4.5" fill="#044588"/><circle cx="262.40" cy="596.75" r="4.5" fill="#07478a"/><circle cx="265.23" cy="612.79" r="4.5" fill="#0a4a8b"/><circle cx="269.90" cy="628.38" r="4.5" fill="#0d4c8c"/><circle cx="276.35" cy="643.33" r="4.5" fill="#104e8e"/><circle cx="284.49" cy="657.43" r="4.5" fill="#13508f"/><circle cx="294.21" cy="670.49" r="4.5" fill="#165290"/><circle cx="305.38" cy="682.33" r="4.5" fill="#185492"/><circle cx="317.85" cy="692.79" r="4.5" fill="#1a5593"/><circle cx="331.45" cy="701.74" r="4.5" fill="#1c5793"/><circle cx="346.00" cy="709.05" r="4.5" fill="#1d5894"/><circle cx="361.30" cy="714.61" r="4.5" fill="#1f5995"/><circle cx="377.14" cy="718.37" r="4.5" fill="#1f5995"/><circle cx="393.31" cy="720.26" r="4.5" fill="#205995"/><circle cx="409.59" cy="720.26" r="4.5" fill="#205995"/><circle cx="425.76" cy="718.37" r="4.5" fill="#1f5995"/><circle cx="441.60" cy="714.61" r="4.5" fill="#1f5995"/><circle cx="456.90" cy="709.05" r="4.5" fill="#1d5894"/><circle cx="471.45" cy="701.74" r="4.5" fill="#1c5793"/><circle cx="485.05" cy="692.79" r="4.5" fill="#1a5593"/><circle cx="497.52" cy="682.33" r="4.5" fill="#185492"/><circle cx="508.69" cy="670.49" r="4.5" fill="#165290"/><circle cx="518.41" cy="657.43" r="4.5" fill="#13508f"/><circle cx="526.55" cy="643.33" r="4.5" fill="#104e8e"/><circle cx="533.00" cy="628.38" r="4.5" fill="#0d4c8c"/><circle cx="537.67" cy="612.79" r="4.5" fill="#0a4a8b"/><circle cx="540.50" cy="596.75" r="4.5" fill="#07478a"/></svg>
</body></html>
